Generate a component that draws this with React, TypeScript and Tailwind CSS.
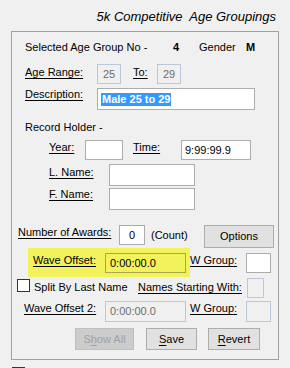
import React from "react";

const U = ({ children }: { children: React.ReactNode }) => (
  <span className="underline underline-offset-[2px] decoration-[1px]">{children}</span>
);

export default function App() {
  const box = "shrink-0 bg-white border border-[#adadad] flex items-center";
  const dis = "shrink-0 bg-[#f0f0f0] border border-[#b9c8da] flex items-center text-[#6d6d6d]";
  return (
    <div className="w-[290px] h-[368px] overflow-hidden bg-[#f0f0f0] text-black font-['Liberation_Sans',Arial,sans-serif] text-[11px] leading-[13px]">
      <div className="h-[31px] flex items-center justify-end pr-[14px] pt-[1px]">
        <span className="italic text-[13px] leading-[15px] whitespace-pre">5k Competitive  Age Groupings</span>
      </div>
      <div className="ml-[11px] w-[268px] h-[329px] border border-[#a0a0a0] flex flex-col">
        {/* Row A */}
        <div className="mt-[8px] h-[14px] flex items-center pl-[13px]">
          <span className="w-[148px] shrink-0">Selected Age Group No -</span>
          <span className="w-[26px] shrink-0 font-bold">4</span>
          <span className="w-[47px] shrink-0">Gender</span>
          <span className="font-bold">M</span>
        </div>
        {/* Row B */}
        <div className="mt-[10px] h-[20px] flex items-center pl-[13px]">
          <span className="w-[72px] shrink-0 -mt-[3px]"><U>Age Range:</U></span>
          <div className={`${dis} w-[24px] h-[20px] justify-center`}>25</div>
          <span className="w-[12px] shrink-0" />
          <span className="w-[24px] shrink-0 -mt-[3px]"><U>To:</U></span>
          <div className={`${dis} w-[24px] h-[20px] justify-center`}>29</div>
        </div>
        {/* Row C */}
        <div className="mt-[4px] h-[22px] flex items-start pl-[13px]">
          <span className="w-[72px] shrink-0"><U>Description:</U></span>
          <div className={`${box} w-[158px] h-[22px] pl-[3px]`}>
            <span className="bg-[#3399ff] text-white font-bold px-[1px] leading-[13px]">Male 25 to 29</span>
          </div>
        </div>
        {/* Row D */}
        <div className="mt-[10px] h-[14px] flex items-center pl-[13px]">
          <span>Record Holder -</span>
        </div>
        {/* Row E */}
        <div className="mt-[6px] h-[20px] flex items-start pl-[37px]">
          <span className="w-[36px] shrink-0 pt-[1px]"><U>Year:</U></span>
          <div className={`${box} w-[38px] h-[20px]`} />
          <span className="w-[10px] shrink-0" />
          <span className="w-[48px] shrink-0 pt-[1px]"><U>Time:</U></span>
          <div className={`${box} w-[70px] h-[20px] pl-[3px]`}>9:99:99.9</div>
        </div>
        {/* Row F */}
        <div className="mt-[4px] h-[22px] flex items-start pl-[37px]">
          <span className="w-[60px] shrink-0 pt-[2px]"><U>L. Name:</U></span>
          <div className={`${box} w-[86px] h-[22px]`} />
        </div>
        {/* Row G */}
        <div className="mt-[2px] h-[22px] flex items-start pl-[37px]">
          <span className="w-[60px] shrink-0 pt-[0px]"><U>F. Name:</U></span>
          <div className={`${box} w-[86px] h-[22px]`} />
        </div>
        {/* Row H */}
        <div className="mt-[15px] h-[23px] flex items-start pl-[6px]">
          <span className="w-[101px] shrink-0 pt-[1px]"><U>Number of Awards:</U></span>
          <div className={`${box} w-[26px] h-[20px] justify-center`}>0</div>
          <span className="w-[59px] shrink-0 pl-[6px] h-[20px] flex items-center">(Count)</span>
          <div className="shrink-0 w-[70px] h-[23px] bg-[#e1e1e1] border border-[#adadad] flex items-center justify-center">Options</div>
        </div>
        {/* Row I */}
        <div className="h-[29px] flex items-start pl-[16px]">
          <div className="shrink-0 w-[162px] h-[29px] bg-[#f2f25c] flex items-start pl-[5px] pt-[5px]">
            <span className="w-[72px] shrink-0 pt-[1px]"><U>Wave Offset:</U></span>
            <div className="shrink-0 w-[81px] h-[20px] border border-[#aaa74a] bg-[#f2f25c] flex items-center pl-[4px]">0:00:00.0</div>
          </div>
          <span className="w-[56px] shrink-0 mt-[5px] pt-[1px]"><U>W Group:</U></span>
          <div className={`${box} w-[25px] h-[20px] mt-[5px]`} />
        </div>
        {/* Row J */}
        <div className="mt-[1px] h-[20px] flex items-start pl-[5px]">
          <div className="shrink-0 w-[13px] h-[13px] mt-[1px] bg-white border border-[#333333]" />
          <span className="w-[104px] shrink-0 ml-[4px] pt-[3px]">Split By Last Name</span>
          <span className="w-[109px] shrink-0 pt-[3px]"><U>Names Starting With:</U></span>
          <div className={`${dis} w-[17px] h-[20px]`} />
        </div>
        {/* Row K */}
        <div className="mt-[3px] h-[21px] flex items-start pl-[12px]">
          <span className="w-[81px] shrink-0 pt-[1px]"><U>Wave Offset 2:</U></span>
          <div className={`${dis} w-[81px] h-[21px] pl-[4px]`}>0:00:00.0</div>
          <span className="w-[60px] shrink-0 pl-[4px] pt-[1px]"><U>W Group:</U></span>
          <div className={`${dis} w-[25px] h-[21px]`} />
        </div>
        {/* Row L */}
        <div className="mt-[6px] h-[22px] flex items-start pl-[63px]">
          <div className="shrink-0 w-[59px] h-[22px] bg-[#cccccc] border border-[#bfbfbf] text-[#a0a0a0] flex items-center justify-center">
            <span>S<U>h</U>ow All</span>
          </div>
          <div className="shrink-0 ml-[12px] w-[51px] h-[22px] bg-[#e1e1e1] border border-[#adadad] flex items-center justify-center">
            <span><U>S</U>ave</span>
          </div>
          <div className="shrink-0 ml-[11px] w-[52px] h-[22px] bg-[#e1e1e1] border border-[#adadad] flex items-center justify-center">
            <span><U>R</U>evert</span>
          </div>
        </div>
      </div>
      <div className="mt-[7px] ml-[12px] w-[13px] h-[13px] bg-white border border-[#333333]" />
    </div>
  );
}
